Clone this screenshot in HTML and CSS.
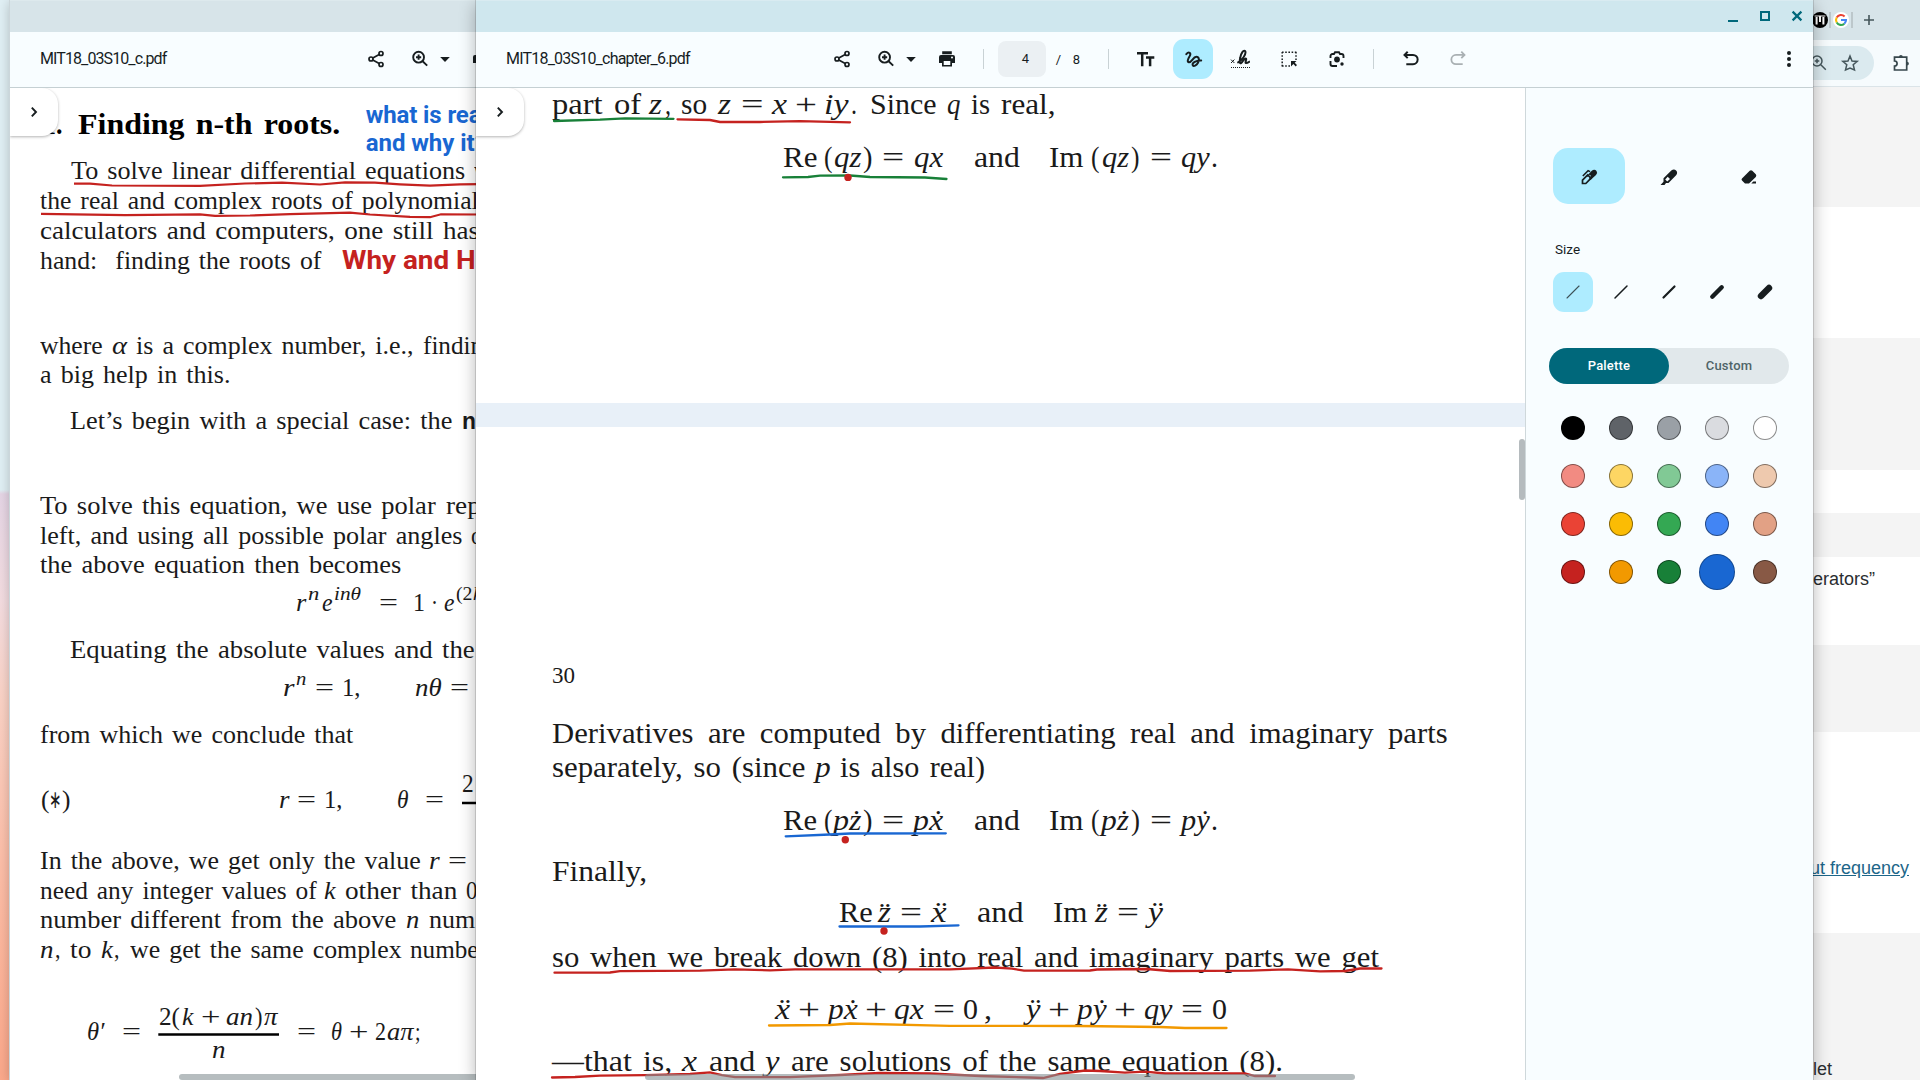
FILE: index.html
```html
<!DOCTYPE html>
<html lang="en">
<head>
<meta charset="utf-8">
<title>MIT18_03S10_chapter_6.pdf</title>
<link rel="stylesheet" href="styles.css">
</head>
<body>
<svg class="defs" aria-hidden="true">
  <symbol id="i-share" viewBox="0 0 20 20"><g fill="none" stroke="currentColor" stroke-width="1.7"><circle cx="15" cy="4.5" r="2"/><circle cx="5" cy="10" r="2"/><circle cx="15" cy="15.5" r="2"/><path d="M6.8 9l6.4-3.6M6.8 11l6.4 3.6"/></g></symbol>
  <symbol id="i-zoom" viewBox="0 0 20 20"><g fill="none" stroke="currentColor" stroke-width="1.9"><circle cx="8.6" cy="8.2" r="5.4"/><path d="M12.6 12.2l4.6 4.4M8.6 5.6v5.2M6 8.2h5.2"/></g></symbol>
  <symbol id="i-caret" viewBox="0 0 20 20"><path fill="currentColor" d="M5.2 8h9.6L10 13z"/></symbol>
  <symbol id="i-print" viewBox="0 0 20 20"><path fill="currentColor" d="M5.2 2.2h9.6v3H5.2zM4 6h12a2 2 0 0 1 2 2v6h-3v3.6H5V14H2V8a2 2 0 0 1 2-2zm2.7 6v4h6.6v-4zM15 7.6a1 1 0 1 0 0 2 1 1 0 0 0 0-2z"/></symbol>
  <symbol id="i-chevron" viewBox="0 0 20 20"><path fill="none" stroke="currentColor" stroke-width="1.9" d="M7.8 5.6l4.2 4.4-4.2 4.4"/></symbol>
</svg>

<main class="desktop">

  <section class="window browser">
    <div class="tabs">
      <svg class="fav" viewBox="0 0 16 16"><circle cx="8" cy="8" r="8" fill="#000"/><path d="M2.6 3.5h10.8v1H2.6zM3.6 5h2v7.5h-2zM7 3.5h2v6.5H7zM10.4 5h2v7.5h-2z" fill="#fff"/></svg>
      <i class="tab-sep"></i>
      <svg class="fav" viewBox="0 0 16 16"><circle cx="8" cy="8" r="8" fill="#fff"/><g fill="none" stroke-width="2.1"><path d="M11.6 4.4A5 5 0 0 0 3.7 5.5" stroke="#ea4335"/><path d="M3.7 5.5a5 5 0 0 0 0 5" stroke="#fbbc04"/><path d="M3.7 10.5a5 5 0 0 0 7.6 1.2" stroke="#34a853"/><path d="M11.3 11.7A5 5 0 0 0 13 8H8" stroke="#4285f4"/></g></svg>
      <i class="tab-sep"></i>
      <svg class="plus" viewBox="0 0 12 12"><path d="M6 1v10M1 6h10" stroke="#45565b" stroke-width="1.6"/></svg>
    </div>
    <div class="nav">
      <div class="omnibox">
        <svg class="ic" viewBox="0 0 20 20"><g fill="none" stroke="#45565b" stroke-width="1.5"><circle cx="8" cy="8" r="5"/><path d="M11.8 11.8l5 5M8 5.7v4.6M5.7 8h4.6"/></g></svg>
        <svg class="ic star" viewBox="0 0 20 20"><path d="M10 3l2 5 5.2.4-4 3.4 1.3 5.1L10 15.1l-4.500 1.800 1.300-5.100-4-3.400L8 8z" fill="none" stroke="#45565b" stroke-width="1.500"/></svg>
      </div>
      <svg class="ic ext" viewBox="0 0 20 20"><path d="M3.500 4.200h12.200v12.800H3.500v-3.800a2.600 2.600 0 0 0 0-5.200z" fill="none" stroke="#37474c" stroke-width="1.700"/><path d="M8 4a1.900 1.900 0 0 1 3.800 0zM16 8.700a1.900 1.900 0 0 1 0 3.800z" fill="#37474c"/></svg>
    </div>
    <div class="web">
      <div class="band b1"></div><div class="band b2"></div><div class="band b3"></div><div class="band b4"></div><div class="band b5"></div>
      <div class="band b6"><span class="w1">erators”</span></div>
      <div class="band b7"></div>
      <div class="band b8"><a class="w2">ut frequency</a></div>
      <div class="band b9"><span class="w3">let</span></div>
    </div>
  </section>

  <section class="window back">
    <div class="titlebar"></div>
    <header class="toolbar">
      <span class="filename" data-w="126.300">MIT18_03S10_c.pdf</span>
      <svg class="ic share"><use href="#i-share"/></svg>
      <svg class="ic zoom"><use href="#i-zoom"/></svg>
      <svg class="ic caret"><use href="#i-caret"/></svg>
      <svg class="ic print"><use href="#i-print"/></svg>
    </header>
    <div class="viewer">
      <div class="page">
        <p class="line" data-y="134.300"><b class="big" data-x="43 62.500">1.</b><b class="big" data-x="78.200 340.500">Finding n-th roots.</b></p>
        <p class="line" data-y="179.300"><span data-x="70.700 465">To solve linear differential equations</span><span data-x="474 512">with</span></p>
        <p class="line" data-y="209.300"><span data-x="40.300 489">the real and complex roots of polynomials</span></p>
        <p class="line" data-y="239"><span data-x="40 479">calculators and computers, one still has</span></p>
        <p class="line" data-y="269"><span data-x="40.300 321.700">hand:&nbsp; finding the roots of</span><span class="note why" data-x="341.700 475.500">Why and H</span></p>
        <p class="line" data-y="354"><span data-x="40.300 103">where</span><i data-x="112 127">α</i><span data-x="136 413.500">is a complex number, i.e.,</span><span data-x="423.300 496">finding</span></p>
        <p class="line" data-y="383.300"><span data-x="40.300 230.700">a big help in this.</span></p>
        <p class="line" data-y="428.700"><span data-x="70.300 452.700">Let’s begin with a special case: the</span><b class="sans" data-x="462 476">n</b></p>
        <p class="line" data-y="514.300"><span data-x="40.300 436">To solve this equation, we use polar</span><span data-x="445.700 600">representation</span></p>
        <p class="line" data-y="544.300"><span data-x="40.300 462.700">left, and using all possible polar angles</span><span data-x="471 490">of</span></p>
        <p class="line" data-y="573.300"><span data-x="40.300 401.700">the above equation then becomes</span></p>
        <p class="line" data-y="610.700"><i data-x="296.200 306.500">r</i><i class="sup" data-x="307.700 319">n</i><i data-x="321.700 332.300">e</i><i class="sup" data-x="334 361">inθ</i><span class="eq" data-x="379 398">=</span><span data-x="413 425">1</span><span data-x="431 438">·</span><i data-x="444 454.500">e</i><span class="sup" data-x="456.500 473">(2</span><i class="sup" data-x="473 482">k</i></p>
        <p class="line" data-y="657.700"><span data-x="70.300 475">Equating the absolute values and the</span></p>
        <p class="line" data-y="696"><i data-x="283 294.500">r</i><i class="sup" data-x="295.700 306">n</i><span class="eq" data-x="315.500 334.500">=</span><span data-x="342 360.500">1,</span><i data-x="415 441.700">nθ</i><span class="eq" data-x="449.700 468.700">=</span></p>
        <p class="line" data-y="743.300"><span data-x="40.300 353.500">from which we conclude that</span></p>
        <p class="line" data-y="792"><span data-x="462.300 474">2</span></p>
        <p class="line" data-y="808.300"><span data-x="40.500 49">(</span><span data-x="49 61.500">∗</span><span data-x="62 70.500">)</span><i data-x="279 289.500">r</i><span class="eq" data-x="297 316">=</span><span data-x="324 342.500">1,</span><i data-x="397 408.500">θ</i><span class="eq" data-x="425 444">=</span></p>
        <p class="line" data-y="869.300"><span data-x="40.300 421">In the above, we get only the value</span><i data-x="429.300 440">r</i><span class="eq" data-x="448 467">=</span></p>
        <p class="line" data-y="899.300"><span data-x="40.300 317">need any integer values of</span><i data-x="324.300 336">k</i><span data-x="345 457.300">other than</span><span data-x="466 477.500">0</span></p>
        <p class="line" data-y="928.300"><span data-x="40.300 396.700">number different from the above</span><i data-x="405.700 419">n</i><span data-x="429.300 475.500">num</span></p>
        <p class="line" data-y="957.700"><i data-x="40 53.500">n</i><span data-x="54.500 60">,</span><span data-x="70.300 91.700">to</span><i data-x="101 113">k</i><span data-x="114 119.500">,</span><span data-x="130 401.700">we get the same complex</span><span data-x="410 478.500">numbe</span></p>
        <p class="line" data-y="1025"><span data-x="159 180">2(</span><i data-x="182 193.500">k</i><span class="eq" data-x="200.500 220">+</span><i data-x="226 253">an</i><span data-x="254.500 262">)</span><i data-x="264 277.500">π</i></p>
        <p class="line" data-y="1040"><i data-x="87 104.500">θ′</i><span class="eq" data-x="121.500 140.500">=</span><span class="eq" data-x="296.500 315.500">=</span><i data-x="331 342">θ</i><span class="eq" data-x="349 368.500">+</span><span data-x="374.500 385.500">2</span><i data-x="387 413.500">aπ</i><span data-x="415 420.500">;</span></p>
        <p class="line" data-y="1058.300"><i data-x="211.500 225">n</i></p>
      </div>
      <p class="note blue"><span data-w="122">what is real</span><br><span data-w="114.500">and why it’</span></p>
      <svg class="ink" viewBox="10 88 1337 992">
        <g fill="none" stroke="#c5221f" stroke-width="2.200">
          <path d="M74 183.700L90 183.700 112 185.500 200 185.900 245 183.500 282 182.700 320 184.500 345 182.300 375 182.700 400 184.300 430 185.700 460 184.300 480 184.100"/>
          <path d="M41 213.800L125 215.200 200 214.300 215 215.800 250 215.500 290 214.200 350 212.700 370 214.500 410 216.800 430 217.200 441 214.300 480 214.500"/>
        </g>
        <path d="M158.300 1034.500H279M462 803H500" stroke="#000" stroke-width="2.600"/>
      </svg>
      <i class="hbar"></i>
      <div class="drawer"><svg class="ic"><use href="#i-chevron"/></svg></div>
    </div>
  </section>

  <section class="window front">
    <div class="titlebar">
      <svg class="ctl" viewBox="0 0 14 14"><path d="M2 12h10" stroke="#00687b" stroke-width="2"/></svg>
      <svg class="ctl" viewBox="0 0 14 14"><path d="M3 3h8v8H3z" fill="none" stroke="#00687b" stroke-width="2"/></svg>
      <svg class="ctl" viewBox="0 0 14 14"><path d="M2.600 2.600l8.800 8.800M11.400 2.600l-8.800 8.800" stroke="#00687b" stroke-width="2.200"/></svg>
    </div>
    <header class="toolbar">
      <span class="filename" data-w="183.800">MIT18_03S10_chapter_6.pdf</span>
      <svg class="ic share"><use href="#i-share"/></svg>
      <svg class="ic zoom"><use href="#i-zoom"/></svg>
      <svg class="ic caret"><use href="#i-caret"/></svg>
      <svg class="ic print"><use href="#i-print"/></svg>
      <i class="sep s1"></i>
      <span class="pagebox">4</span><span class="slash">/</span><span class="total">8</span>
      <i class="sep s2"></i>
      <svg class="ic tt" viewBox="0 0 20 20"><path d="M2 4.300h11M7.200 4.300v13M11 8.500h8.300M15.100 8.500v8.800" stroke="currentColor" stroke-width="2.500" fill="none"/></svg>
      <span class="pick"><svg class="ic" viewBox="0 0 20 20"><path d="M3.300 5.200C5.800 2.300 8.600 3.800 6.600 7.300 4.600 10.600 4 13 6 13.300c2.700.2 4-5.500 7.400-5.500 2.700 0 3.100 3.300 1.600 6-1.400 2.500-4.600 4.300-5.300 2.400-.8-2.300 3.300-5 8.500-4.700" fill="none" stroke="currentColor" stroke-width="2" stroke-linecap="round"/></svg></span>
      <svg class="ic sign" viewBox="0 0 20 20"><path d="M1 10.600l3.400 3.400M4.400 10.600L1 14" stroke="currentColor" stroke-width="1"/><path d="M7.400 13.800C12 11.500 16.600 5.200 15.200 2.200c-1.600-1.900-4.300 2.300-5 6.600-.8 4.300-.4 6 .9 5.300 1.800-1 2.600-4.500 4.600-4.700 1.600.2-1.300 4.600.4 4.700 1.100 0 2-.5 3.900-1.700" fill="none" stroke="currentColor" stroke-width="2"/><path d="M1 18.500h19" stroke="currentColor" stroke-width="1" stroke-dasharray="1 1"/></svg>
      <svg class="ic sel" viewBox="0 0 20 20"><path d="M3 3.200h14.500M3.200 3v14.500M17 3v8M3 17h8" fill="none" stroke="currentColor" stroke-width="1.500" stroke-dasharray="1.600 1.600"/><path d="M12 12h5.500l-1.800 1.800 2.300 2.300-1.300 1.300-2.300-2.300L12 17.500z" fill="currentColor"/></svg>
      <svg class="ic lens" viewBox="0 0 20 20"><path d="M3.500 9V7a2 2 0 0 1 2-2H7l1-1.700h4L13 5h1.500a2 2 0 0 1 2 2v2M3.500 12v3a2 2 0 0 0 2 2H10" fill="none" stroke="currentColor" stroke-width="1.900"/><circle cx="10" cy="10.500" r="2.900" fill="currentColor"/><circle cx="15" cy="15" r="1.700" fill="currentColor"/></svg>
      <i class="sep s3"></i>
      <svg class="ic undo" viewBox="0 0 20 20"><path d="M7.700 2.700L4.500 5.900l3.200 3.200M4.600 5.900H13a4.200 4.200 0 0 1 0 9.300H6.300" fill="none" stroke="currentColor" stroke-width="2"/></svg>
      <svg class="ic redo" viewBox="0 0 20 20"><path d="M12.300 2.700l3.200 3.200-3.200 3.200M15.400 5.900H7a4.200 4.200 0 0 0 0 9.300h6.700" fill="none" stroke="currentColor" stroke-width="1.800"/></svg>
      <svg class="ic more" viewBox="0 0 20 20"><g fill="currentColor"><circle cx="10" cy="4" r="2"/><circle cx="10" cy="10" r="2"/><circle cx="10" cy="16" r="2"/></g></svg>
    </header>
    <div class="split">
      <div class="viewer">
        <div class="page large">
          <p class="line" data-y="114"><span data-x="552.300 641.500">part of</span><i data-x="649 662">z</i><span data-x="665 671">,</span><span data-x="681.400 707.500">so</span><i data-x="718.500 731.500">z</i><span class="eq" data-x="741 763.500">=</span><i data-x="772 787">x</i><span class="eq" data-x="795.500 817.500">+</span><i data-x="824.500 849">iy</i><span data-x="851 857">.</span><span data-x="870.500 937">Since</span><i data-x="947 960.500">q</i><span data-x="971.500 990.500">is</span><span data-x="1001 1055.500">real,</span></p>
          <p class="line" data-y="167.300"><span data-x="782.500 817">Re</span><span data-x="823.500 832">(</span><i data-x="834 861.500">qz</i><span data-x="863 872.500">)</span><span class="eq" data-x="882.300 904.500">=</span><i data-x="914 943.200">qx</i><span data-x="973.600 1019.500">and</span><span data-x="1049.500 1084">Im</span><span data-x="1091.500 1100">(</span><i data-x="1102 1129">qz</i><span data-x="1131 1139.500">)</span><span class="eq" data-x="1150 1172">=</span><i data-x="1181.400 1210">qy</i><span data-x="1211.500 1218.500">.</span></p>
          <div class="gap"></div>
          <p class="line" data-y="682.700"><span class="num" data-x="552 575">30</span></p>
          <p class="line" data-y="742.700"><span data-x="552.300 1448" class="wide">Derivatives are computed by differentiating real and imaginary parts</span></p>
          <p class="line" data-y="777.300"><span data-x="552.300 805.700">separately, so (since</span><i data-x="815 830.700">p</i><span data-x="840.500 985.500">is also real)</span></p>
          <p class="line" data-y="829.700"><span data-x="782.500 816.500">Re</span><span data-x="823.500 832">(</span><i data-x="833 861.500">pż</i><span data-x="863 872.500">)</span><span class="eq" data-x="882.300 904.500">=</span><i data-x="913.300 943.300">pẋ</i><span data-x="973.600 1019.500">and</span><span data-x="1049.500 1084">Im</span><span data-x="1091.500 1100">(</span><i data-x="1101 1129">pż</i><span data-x="1131 1140">)</span><span class="eq" data-x="1150 1172">=</span><i data-x="1181.400 1210">pẏ</i><span data-x="1211.500 1218.500">.</span></p>
          <p class="line" data-y="880.700"><span data-x="552.300 647.500">Finally,</span></p>
          <p class="line" data-y="921.700"><span data-x="838.500 872.300">Re</span><i data-x="878.500 891.500">z̈</i><span class="eq" data-x="900.500 922.500">=</span><i data-x="931.500 947">ẍ</i><span data-x="977.500 1024">and</span><span data-x="1053.500 1088">Im</span><i data-x="1095 1108">z̈</i><span class="eq" data-x="1117.500 1139.500">=</span><i data-x="1148 1163">ÿ</i></p>
          <p class="line" data-y="966.700"><span data-x="552 1379">so when we break down (8) into real and imaginary parts we get</span></p>
          <p class="line" data-y="1019"><i data-x="774.500 789.500">ẍ</i><span class="eq" data-x="798 820">+</span><i data-x="827.700 857.300">pẋ</i><span class="eq" data-x="865 887">+</span><i data-x="894.300 924">qx</i><span class="eq" data-x="933.500 955.500">=</span><span data-x="963.500 978.500">0</span><span data-x="984 992">,</span><i data-x="1026 1040.500">ÿ</i><span class="eq" data-x="1048 1070">+</span><i data-x="1077.500 1107">pẏ</i><span class="eq" data-x="1114.500 1136.500">+</span><i data-x="1144 1172.500">qy</i><span class="eq" data-x="1181.500 1203.500">=</span><span data-x="1212 1227">0</span></p>
          <p class="line" data-y="1071"><span data-x="552.300 672.500">—that is,</span><i data-x="682.500 697.500">x</i><span data-x="709.500 755.700">and</span><i data-x="765.500 780">y</i><span data-x="791 1283">are solutions of the same equation (8).</span></p>
        </div>
        <svg class="ink" viewBox="476 88 1337 992">
          <g fill="none" stroke-width="2.300" stroke-linecap="round">
            <path stroke="#188038" d="M554 121L600 119.700 625 118.300 673.500 118.800M783 177.300L808 177 820 175.600 850 175.500 870 177 925 177.500 946.500 179"/>
            <path stroke="#c5221f" d="M677.500 119.300L710 120 720 122 760 122 800 121.200 850 122.300M554.500 972.700L610 972.500 620 971.200 700 970.700 735 969.300 770 970.300 795 969.300 950 969.300 995 967.500 1012 968.700 1024 970.700 1090 970.500 1097 969.500 1147 969 1170 971 1250 970.700 1288 969.300 1320 971.300 1345 971 1360 968.500 1381.500 968.500M552 1077.500L575 1077 600 1075.600 645 1075.200 690 1074 710 1072.300 722 1075.200 735 1077.200 790 1077.200 840 1075 880 1073 930 1073.500 980 1076 1030 1077.500 1043 1078 1060 1073.800 1085 1070.500 1100 1071 1125 1072.700 1145 1071.700 1165 1073.500 1245 1073.500 1255 1076 1275 1076"/>
            <path stroke="#1967d2" d="M785.700 836.300L830 834.500 850 833.500 945.800 833.300M839.500 926.500L920 926.500 958.500 925.300"/>
            <path stroke="#f29900" d="M769 1025.500L830 1025 850 1023.500 950 1025.800 1080 1026 1160 1027 1185 1028 1226.500 1028"/>
          </g>
          <g fill="#c5221f"><circle cx="848" cy="177.400" r="3.700"/><circle cx="845.300" cy="839.700" r="3.700"/><circle cx="884" cy="931" r="3.700"/></g>
        </svg>
        <i class="vbar"></i><i class="hbar"></i>
        <div class="drawer"><svg class="ic"><use href="#i-chevron"/></svg></div>
      </div>
      <aside class="panel">
        <div class="tools">
          <span class="tool on"><svg class="ic" viewBox="0 0 20 20"><path d="M3.500 16.500v-3.400L8.700 7.900 12 11.200 6.800 16.500z" fill="none" stroke="currentColor" stroke-width="1.700"/><path d="M7.500 9.500l5-5.500q3-2.500 5 0 1.500 2-.5 4l-5.500 5-1.500-2 2-2-1.200-1.200-2 2z" fill="currentColor"/><path d="M3.800 9l5.300-5.400 2 1" fill="none" stroke="currentColor" stroke-width="1.500"/></svg></span>
          <span class="tool"><svg class="ic" viewBox="0 0 20 20"><path fill="currentColor" fill-rule="evenodd" d="M1.500 18l3-3.200v-3.600L12.300 3.400q2.700-2 4.800 0 2 2.200 0 4.800L9.500 16H7L5.500 18zM6.200 12.500L8.300 14.500 11 12 8.700 9.800z"/></svg></span>
          <span class="tool"><svg class="ic" viewBox="0 0 20 20"><path fill="currentColor" d="M3 11.500L10.700 3.800q1.300-1 2.600 0L16.800 7.300q1 1.300 0 2.600L10 16.500H6L3 13.500q-1-1 0-2zM12.300 16.500l2-2h2.700v2z"/></svg></span>
        </div>
        <h2 class="label">Size</h2>
        <div class="sizes">
          <span class="size on"><svg class="ic" viewBox="0 0 20 20"><path d="M4 16L16 4" stroke-width="1.100" stroke-opacity=".75"/></svg></span>
          <span class="size"><svg class="ic" viewBox="0 0 20 20"><path d="M4 16L16 4" stroke-width="1.500"/></svg></span>
          <span class="size"><svg class="ic" viewBox="0 0 20 20"><path d="M4.500 15.500L15.500 4.500" stroke-width="2.200"/></svg></span>
          <span class="size"><svg class="ic" viewBox="0 0 20 20"><path d="M5.300 14.700L14.700 5.300" stroke-width="4.400"/></svg></span>
          <span class="size"><svg class="ic" viewBox="0 0 20 20"><path d="M6 14L14 6" stroke-width="6.400"/></svg></span>
        </div>
        <div class="tabs2"><span class="seg on">Palette</span><span class="seg">Custom</span></div>
        <div class="swatches">
          <i class="sw c1"></i><i class="sw c2"></i><i class="sw c3"></i><i class="sw c4"></i><i class="sw c5"></i>
          <i class="sw c6"></i><i class="sw c7"></i><i class="sw c8"></i><i class="sw c9"></i><i class="sw c10"></i>
          <i class="sw c11"></i><i class="sw c12"></i><i class="sw c13"></i><i class="sw c14"></i><i class="sw c15"></i>
          <i class="sw c16"></i><i class="sw c17"></i><i class="sw c18"></i><i class="sw c19 on"></i><i class="sw c20"></i>
        </div>
      </aside>
    </div>
  </section>
</main>
<script src="textlayer.js"></script>
</body>
</html>
```
FILE: styles.css
```css
* { box-sizing: border-box; }
body { margin: 0; overflow: hidden; font-family: Roboto, "Noto Sans", sans-serif; color: #171d1f; }
p, h2 { margin: 0; }
.defs { position: absolute; width: 0; height: 0; }
.desktop {
  position: relative; width: 1920px; height: 1080px; overflow: hidden;
  background: linear-gradient(180deg, #e1f0f5 0 490px, #e6d6e6 494px, #f4dde1 600px, #fbd3c6 700px, #fdbfa9 860px, #fca98b 1080px);
}
.ic { display: block; flex: none; width: 20px; height: 20px; }

/* windows on the desktop */
.window { position: absolute; top: 0; height: 1080px; overflow: hidden; background: #fff; }
.back { left: 10px; width: 1337px; box-shadow: 0 0 0 1px #cbd6da, 0 2px 12px rgba(0, 0, 0, .25); }
.front { left: 476px; width: 1337px; box-shadow: 0 0 0 1px rgba(0, 0, 0, .13), 0 4px 16px rgba(0, 0, 0, .3); }
.browser { left: 1320px; width: 600px; }

.titlebar { height: 32px; background: #d7e4e9; border-top: 1px solid #dde9ed; display: flex; justify-content: flex-end; }
.front .titlebar { background: #cfe7ee; border-top-color: #d9ebf1; gap: 18px; padding: 8px 9px 0 0; }
.ctl { width: 14px; height: 14px; }

.toolbar { display: flex; align-items: center; height: 56px; padding-bottom: 1px; background: #f8fdff; border-bottom: 1px solid #c5d0d3; }
.filename { font-size: 16px; width: 310px; margin-left: 30px; white-space: nowrap; flex: none; line-height: 24px; }
.share { margin-left: 16px; }
.zoom { margin-left: 24px; }
.caret { margin-left: 5px; }
.print { margin-left: 15.500px; }
.sep { width: 1px; height: 20px; background: #c9d2d5; flex: none; }
.s1 { margin-left: 26px; }
.pagebox { flex: none; margin-left: 14px; width: 48px; height: 36px; line-height: 36px; border-radius: 8px; background: #ebf0f3; text-align: center; font-size: 13px; padding-left: 8px; }
.slash { width: 8px; margin-left: 9px; font-size: 13px; text-align: center; }
.total { width: 10px; margin-left: 9px; font-size: 13px; text-align: center; }
.s2 { margin-left: 26px; }
.tt { margin-left: 26px; }
.pick { flex: none; width: 40px; height: 40px; margin-left: 18px; border-radius: 11px; background: #aeecff; display: grid; place-items: center; }
.sign { margin-left: 17px; }
.sel { margin-left: 29px; }
.lens { margin-left: 28px; }
.s3 { margin-left: 26px; }
.undo { margin-left: 26px; }
.redo { margin-left: 29px; color: #a9b0b3; }
.more { margin-left: auto; margin-right: 14px; }

/* PDF viewer */
.viewer { position: relative; flex: 1; height: 992px; overflow: hidden; background: #fff; }
.page { display: flex; flex-direction: column; font: 24.6px "Liberation Serif", serif; color: #1a1a1a; }
.page.large { font-size: 28.4px; }
.gap { height: 24.600px; margin-top: 235.400px; flex: none; background: #e8f0f8; }
.line { display: flex; align-items: baseline; height: 30px; flex: none; white-space: nowrap; }
/* strut: its bottom edge is the baseline of the line */
.line::before { content: ""; display: block; width: 0; height: 30px; }
.line > * { display: block; flex: none; line-height: 30px; word-spacing: .1em; transform-origin: 0 0; }
.wide { word-spacing: .22em !important; }
.big { font-size: 29px; color: #000; }
.num { font-size: 23px; }
.sup { font-size: 18px; position: relative; top: -10.500px; }
.sans { font-family: "Liberation Sans", sans-serif; font-size: 23px; }
.note { font-family: Roboto, sans-serif; font-weight: 700; word-spacing: 0 !important; }
.why { color: #c5221f; font-size: 26.700px; }
.blue { position: absolute; left: 355.700px; top: 12.500px; font-size: 24px; line-height: 28px; color: #1967d2; white-space: nowrap; }
.ink { position: absolute; left: 0; top: 0; width: 1337px; height: 992px; pointer-events: none; }
.hbar { position: absolute; left: 169px; bottom: 0; width: 900px; height: 6px; border-radius: 3px; background: rgba(133, 145, 149, .6); }
.front .hbar { width: 710px; }
.vbar { position: absolute; right: 0; top: 351px; width: 6px; height: 61px; border-radius: 3px; background: #b5bbbe; }
.drawer { position: absolute; left: 0; top: 0; width: 48px; height: 48px; padding: 14px; border-radius: 0 16px 16px 0; background: #fff; box-shadow: 0 1px 3px rgba(0, 0, 0, .3); }
.front .split { display: flex; }

/* annotation side panel */
.panel { width: 288px; height: 992px; flex: none; background: #f8fdff; border-left: 1px solid #cfd8db; padding: 60px 0 0 23px; }
.tools { display: grid; grid-template-columns: repeat(3, 80px); }
.tool { display: grid; place-items: center; width: 72px; height: 56px; margin: 0 4px; border-radius: 15px; padding-top: 2px; }
.tool.on, .size.on { background: #aeecff; }
.label { font-size: 13.500px; font-weight: 400; line-height: 20px; margin: 35px 0 13px 6px; }
.sizes { display: grid; grid-template-columns: repeat(5, 48px); }
.size { display: grid; place-items: center; width: 40px; height: 40px; margin: 0 4px; border-radius: 11px; }
.size path { stroke: currentColor; stroke-linecap: round; }
.tabs2 { display: flex; width: 240px; height: 36px; margin-top: 36px; border-radius: 18px; background: #e1e8eb; }
.seg { width: 120px; line-height: 36px; text-align: center; font-size: 13px; font-weight: 500; letter-spacing: .2px; color: #4f6468; border-radius: 18px; }
.seg.on { background: #00687b; color: #fff; }
.swatches { display: grid; grid-template-columns: repeat(5, 48px); grid-auto-rows: 48px; place-items: center; margin-top: 20px; }
.sw { width: 24px; height: 24px; border-radius: 50%; border: 1px solid rgba(0, 0, 0, .45); }
.sw.on { width: 36px; height: 36px; border-color: rgba(0, 0, 0, .3); }
.c1 { background: #000; } .c2 { background: #5f6368; } .c3 { background: #9aa0a6; } .c4 { background: #dadce0; } .c5 { background: #fff; }
.c6 { background: #f28b82; } .c7 { background: #fdd663; } .c8 { background: #81c995; } .c9 { background: #8ab4f8; } .c10 { background: #eec9ae; }
.c11 { background: #ea4335; } .c12 { background: #fbbc04; } .c13 { background: #34a853; } .c14 { background: #4285f4; } .c15 { background: #e2a185; }
.c16 { background: #c5221f; } .c17 { background: #f29900; } .c18 { background: #188038; } .c19 { background: #1967d2; } .c20 { background: #885945; }

/* browser window behind */
.tabs { display: flex; align-items: center; height: 40px; background: #d7e4e9; padding-left: 492px; }
.fav { width: 16px; height: 16px; flex: none; }
.tab-sep { width: 2px; height: 16px; background: #bcc7cb; margin: 0 2px 0 1px; flex: none; }
.tab-sep + .fav { margin-right: 1px; }
.plus { width: 12px; height: 12px; margin-left: 8px; }
.nav { display: flex; align-items: center; height: 47px; background: #f6fbfd; border-bottom: 1px solid #dbe4e8; }
.omnibox { display: flex; align-items: center; justify-content: flex-end; height: 34px; width: 554px; padding-right: 14px; background: #dbeaef; border-radius: 17px; margin-bottom: 1px; }
.star { margin-left: 11px; }
.ext { margin-left: 17px; }
.web { font: 18px "Liberation Sans", sans-serif; color: #2a2d30; }
.band { background: #fff; display: flex; justify-content: flex-end; white-space: nowrap; }
.band:nth-child(odd) { background: #f4f4f4; }
.b1 { height: 120px; } .b2 { height: 131px; } .b3 { height: 132px; } .b4 { height: 43px; } .b5 { height: 44px; }
.b6 { height: 88px; padding: 12px 45px 0 0; } .b7 { height: 87px; } .b8 { height: 201px; padding: 126px 11px 0 0; } .b9 { height: 147px; padding: 126px 88px 0 0; }
.w2 { color: #1d6689; text-decoration: underline; }
```
FILE: textlayer.js
```js
// Places the text runs of each PDF page and stretches every run to its measured width.
document.querySelectorAll('.page').forEach(function (page) {
  var box = page.getBoundingClientRect();
  var bottom = box.top;
  Array.prototype.forEach.call(page.children, function (el) {
    if (el.className === 'gap') { bottom = 427.3; return; }
    var top = Number(el.dataset.y) - 30;
    el.style.marginTop = (top - bottom) + 'px';
    bottom = top + 30;
    var end = box.left;
    Array.prototype.forEach.call(el.children, function (run) {
      var x = run.dataset.x.split(' ').map(Number);
      var natural = run.getBoundingClientRect().width;
      run.style.marginLeft = (x[0] - end) + 'px';
      run.style.width = (x[1] - x[0]) + 'px';
      run.style.transform = 'scaleX(' + (x[1] - x[0]) / natural + ')';
      end = x[1];
    });
  });
});
document.querySelectorAll('[data-w]').forEach(function (el) {
  var range = document.createRange();
  range.selectNodeContents(el);
  var extra = Number(el.dataset.w) - range.getBoundingClientRect().width;
  el.style.letterSpacing = extra / el.textContent.length + 'px';
});
```
